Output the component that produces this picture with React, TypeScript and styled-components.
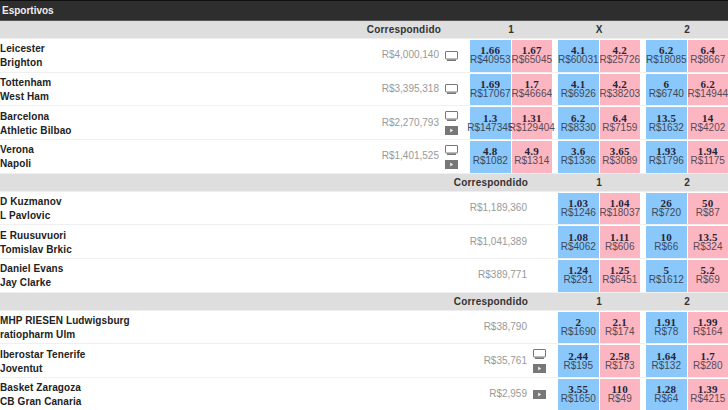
import React from "react";
import styled, { createGlobalStyle } from "styled-components";

type Odd = [string, string];
type Match = {
  home: string;
  away: string;
  matched: string;
  tv?: boolean;
  play?: boolean;
  odds: Odd[];
};
type Section = { labels: string[]; matches: Match[] };

const sections: Section[] = [
  {
    labels: ["1", "X", "2"],
    matches: [
      {
        home: "Leicester",
        away: "Brighton",
        matched: "R$4,000,140",
        tv: true,
        odds: [
          ["1.66", "R$40953"],
          ["1.67", "R$65045"],
          ["4.1", "R$60031"],
          ["4.2", "R$25726"],
          ["6.2", "R$18085"],
          ["6.4", "R$8667"],
        ],
      },
      {
        home: "Tottenham",
        away: "West Ham",
        matched: "R$3,395,318",
        tv: true,
        odds: [
          ["1.69", "R$17067"],
          ["1.7", "R$46664"],
          ["4.1", "R$6926"],
          ["4.2", "R$38203"],
          ["6", "R$6740"],
          ["6.2", "R$14944"],
        ],
      },
      {
        home: "Barcelona",
        away: "Athletic Bilbao",
        matched: "R$2,270,793",
        tv: true,
        play: true,
        odds: [
          ["1.3", "R$147345"],
          ["1.31", "R$129404"],
          ["6.2", "R$8330"],
          ["6.4", "R$7159"],
          ["13.5", "R$1632"],
          ["14", "R$4202"],
        ],
      },
      {
        home: "Verona",
        away: "Napoli",
        matched: "R$1,401,525",
        tv: true,
        play: true,
        odds: [
          ["4.8", "R$1082"],
          ["4.9", "R$1314"],
          ["3.6", "R$1336"],
          ["3.65", "R$3089"],
          ["1.93", "R$1796"],
          ["1.94", "R$1175"],
        ],
      },
    ],
  },
  {
    labels: ["1", "2"],
    matches: [
      {
        home: "D Kuzmanov",
        away: "L Pavlovic",
        matched: "R$1,189,360",
        odds: [
          ["1.03", "R$1246"],
          ["1.04", "R$18037"],
          ["26", "R$720"],
          ["50", "R$87"],
        ],
      },
      {
        home: "E Ruusuvuori",
        away: "Tomislav Brkic",
        matched: "R$1,041,389",
        odds: [
          ["1.08", "R$4062"],
          ["1.11", "R$606"],
          ["10", "R$66"],
          ["13.5", "R$324"],
        ],
      },
      {
        home: "Daniel Evans",
        away: "Jay Clarke",
        matched: "R$389,771",
        odds: [
          ["1.24", "R$291"],
          ["1.25", "R$6451"],
          ["5", "R$1612"],
          ["5.2", "R$69"],
        ],
      },
    ],
  },
  {
    labels: ["1", "2"],
    matches: [
      {
        home: "MHP RIESEN Ludwigsburg",
        away: "ratiopharm Ulm",
        matched: "R$38,790",
        odds: [
          ["2", "R$1690"],
          ["2.1", "R$174"],
          ["1.91", "R$78"],
          ["1.99", "R$164"],
        ],
      },
      {
        home: "Iberostar Tenerife",
        away: "Joventut",
        matched: "R$35,761",
        tv: true,
        play: true,
        odds: [
          ["2.44", "R$195"],
          ["2.58", "R$173"],
          ["1.64", "R$132"],
          ["1.7", "R$280"],
        ],
      },
      {
        home: "Basket Zaragoza",
        away: "CB Gran Canaria",
        matched: "R$2,959",
        play: true,
        odds: [
          ["3.55", "R$1650"],
          ["110", "R$49"],
          ["1.28", "R$64"],
          ["1.39", "R$4215"],
        ],
      },
    ],
  },
];

const GlobalStyle = createGlobalStyle`
  html, body {
    margin: 0;
    padding: 0;
    background: #fff;
    overflow: hidden;
  }
`;

const Page = styled.div`
  width: 728px;
  height: 410px;
  overflow: hidden;
  font-family: "Liberation Sans", Arial, sans-serif;
`;

const TopBar = styled.div`
  height: 19px;
  line-height: 19px;
  padding-left: 2px;
  background: #2e2e2e;
  border-top: 1px solid #111;
  border-bottom: 1px solid #555;
  color: #eee;
  font-size: 10px;
  font-weight: 700;
`;

const SectionHead = styled.div`
  display: flex;
  justify-content: flex-end;
  height: 18px;
  line-height: 18px;
  box-sizing: border-box;
  background: #dedede;
  border-bottom: 1px solid #eee;
  color: #333;
  font-size: 10px;
  font-weight: 700;
`;

const HeadTitle = styled.div<{ $wide: boolean }>`
  letter-spacing: 0.2px;
  margin-right: ${(p) => (p.$wide ? "23px" : "24px")};
`;

const HeadLabel = styled.div`
  width: 82px;
  margin-left: 6px;
  text-align: center;
`;

const Row = styled.div`
  display: flex;
  height: 33.67px;
  box-sizing: border-box;
  padding-top: 1px;
  border-bottom: 1px solid #f0f0f0;
`;

const Names = styled.div`
  flex: 1;
  display: flex;
  flex-direction: column;
  justify-content: center;
  gap: 3px;
  color: #222;
  font-size: 10px;
  font-weight: 700;
  line-height: 11px;
  letter-spacing: 0.1px;
`;

const Matched = styled.div`
  align-self: center;
  margin-top: -2px;
  color: #999;
  font-size: 10px;
`;

const Media = styled.div`
  width: 13px;
  margin: 0 6px;
  display: flex;
  flex-direction: column;
  align-items: center;
  justify-content: center;
  gap: 5px;
`;

const OddsGroup = styled.div`
  display: flex;
  width: 82px;
  margin-left: 6px;

  &:first-of-type {
    margin-left: 0;
  }
`;

const Cell = styled.div<{ $lay: boolean }>`
  flex: 1;
  min-width: 0;
  margin-left: ${(p) => (p.$lay ? "1px" : "0")};
  display: flex;
  flex-direction: column;
  align-items: center;
  justify-content: center;
  background: ${(p) => (p.$lay ? "#fbb6c2" : "#8ac7fb")};
  position: relative;
  white-space: nowrap;
`;

const Price = styled.div`
  color: #252535;
  font-family: "Liberation Serif", serif;
  font-size: 11px;
  font-weight: 700;
  line-height: 9px;
  letter-spacing: 0.2px;
`;

const Size = styled.div<{ $lay: boolean }>`
  color: ${(p) => (p.$lay ? "#5a4a55" : "#3a4a5a")};
  font-size: 10px;
  line-height: 10px;
`;

const TvIcon = () => (
  <svg width="13" height="10" viewBox="0 0 13 10">
    <rect x="0.5" y="0.5" width="12" height="7.5" rx="0.5" fill="#fff" stroke="#777" />
    <rect x="2" y="8.5" width="9" height="1.5" fill="#777" />
  </svg>
);

const PlayIcon = () => (
  <svg width="13" height="9" viewBox="0 0 13 9">
    <rect width="13" height="9" fill="#777" />
    <path d="M5.2 2.6 L8.2 4.5 L5.2 6.4 Z" fill="#eee" />
  </svg>
);

const OddsCells = ({ odds }: { odds: Odd[] }) => {
  const groups: Odd[][] = [];
  for (let i = 0; i < odds.length; i += 2) groups.push(odds.slice(i, i + 2));
  return (
    <>
      {groups.map((g, i) => (
        <OddsGroup key={i}>
          {g.map((o, j) => (
            <Cell key={j} $lay={j === 1}>
              <Price>{o[0]}</Price>
              <Size $lay={j === 1}>{o[1]}</Size>
            </Cell>
          ))}
        </OddsGroup>
      ))}
    </>
  );
};

const App = () => {
  return (
    <Page>
      <GlobalStyle />
      <TopBar>Esportivos</TopBar>
      {sections.map((s, i) => (
        <div key={i}>
          <SectionHead>
            <HeadTitle $wide={s.labels.length === 3}>Correspondido</HeadTitle>
            {s.labels.map((l) => (
              <HeadLabel key={l}>{l}</HeadLabel>
            ))}
          </SectionHead>
          {s.matches.map((m) => (
            <Row key={m.home}>
              <Names>
                <div>{m.home}</div>
                <div>{m.away}</div>
              </Names>
              <Matched>{m.matched}</Matched>
              <Media>
                {m.tv && <TvIcon />}
                {m.play && <PlayIcon />}
              </Media>
              <OddsCells odds={m.odds} />
            </Row>
          ))}
        </div>
      ))}
    </Page>
  );
};

export default App;
